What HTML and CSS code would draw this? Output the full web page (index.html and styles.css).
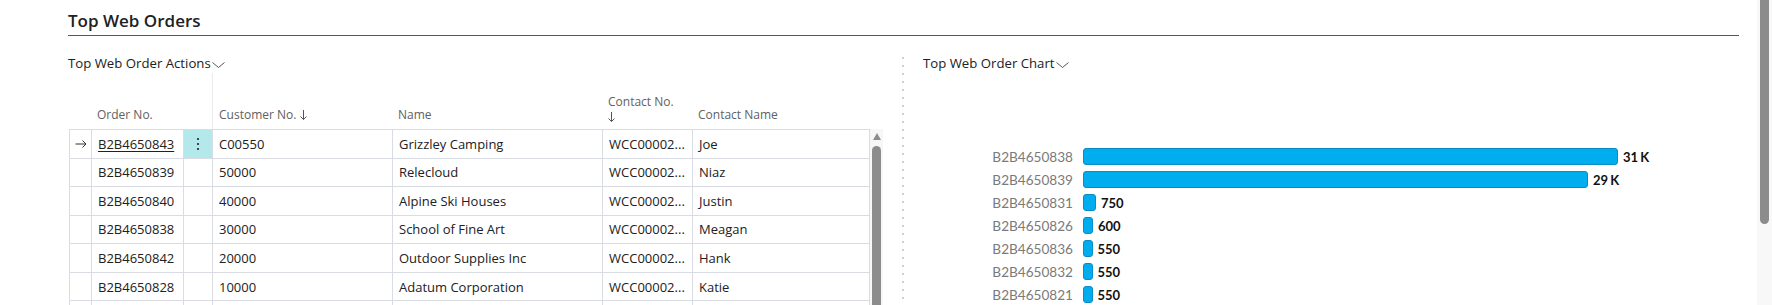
FILE: index.html
```html
<!DOCTYPE html>
<html>
<head>
<meta charset="utf-8">
<link rel="stylesheet" href="styles.css">
</head>
<body>
<div class="page">
  <main class="main">
    <h1 class="title">Top Web Orders</h1>
    <div class="parts">
      <section class="actions">
        <div class="part-head">Top Web Order Actions<svg class="chev" width="13" height="6" viewBox="0 0 13 6"><polyline points="0.5,0.5 6.5,5.5 12.5,0.5" fill="none" stroke="#555" stroke-width="1"/></svg></div>
        <div class="grid-wrap">
          <table class="grid">
            <colgroup>
              <col class="c-sel"><col class="c-no"><col class="c-act"><col class="c-cust"><col class="c-name"><col class="c-cno"><col class="c-cname">
            </colgroup>
            <thead>
              <tr class="head">
                <th></th>
                <th>Order No.</th>
                <th></th>
                <th class="frozen">Customer No. <svg class="sort" width="7" height="10" viewBox="0 0 7 10"><line x1="3.5" y1="0" x2="3.5" y2="9.5" stroke="#555" stroke-width="1"/><polyline points="0.5,6.5 3.5,9.5 6.5,6.5" fill="none" stroke="#555" stroke-width="1"/></svg></th>
                <th>Name</th>
                <th class="two">Contact No.<br><svg class="sort" width="7" height="10" viewBox="0 0 7 10"><line x1="3.5" y1="0" x2="3.5" y2="9.5" stroke="#555" stroke-width="1"/><polyline points="0.5,6.5 3.5,9.5 6.5,6.5" fill="none" stroke="#555" stroke-width="1"/></svg></th>
                <th>Contact Name</th>
              </tr>
            </thead>
            <tbody>
              <tr class="current">
                <td class="sel"><svg width="12" height="8" viewBox="0 0 12 8"><line x1="0.5" y1="4" x2="11" y2="4" stroke="#333" stroke-width="1"/><polyline points="7.5,0.5 11,4 7.5,7.5" fill="none" stroke="#333" stroke-width="1"/></svg></td>
                <td><a class="link">B2B4650843</a></td>
                <td class="act"><svg width="4" height="14" viewBox="0 0 4 14"><circle cx="2" cy="2" r="1.1" fill="#222"/><circle cx="2" cy="7" r="1.1" fill="#222"/><circle cx="2" cy="12" r="1.1" fill="#222"/></svg></td>
                <td>C00550</td>
                <td>Grizzley Camping</td>
                <td>WCC00002...</td>
                <td>Joe</td>
              </tr>
              <tr>
                <td class="sel"></td><td>B2B4650839</td><td class="act"></td><td>50000</td><td>Relecloud</td><td>WCC00002...</td><td>Niaz</td>
              </tr>
              <tr>
                <td class="sel"></td><td>B2B4650840</td><td class="act"></td><td>40000</td><td>Alpine Ski Houses</td><td>WCC00002...</td><td>Justin</td>
              </tr>
              <tr>
                <td class="sel"></td><td>B2B4650838</td><td class="act"></td><td>30000</td><td>School of Fine Art</td><td>WCC00002...</td><td>Meagan</td>
              </tr>
              <tr>
                <td class="sel"></td><td>B2B4650842</td><td class="act"></td><td>20000</td><td>Outdoor Supplies Inc</td><td>WCC00002...</td><td>Hank</td>
              </tr>
              <tr>
                <td class="sel"></td><td>B2B4650828</td><td class="act"></td><td>10000</td><td>Adatum Corporation</td><td>WCC00002...</td><td>Katie</td>
              </tr>
              <tr>
                <td class="sel"></td><td></td><td class="act"></td><td></td><td></td><td></td><td></td>
              </tr>
            </tbody>
          </table>
          <div class="vscroll"><span class="up"></span><span class="thumb"></span></div>
        </div>
      </section>
      <div class="divider"></div>
      <section class="chart-part">
        <div class="part-head">Top Web Order Chart<svg class="chev" width="13" height="6" viewBox="0 0 13 6"><polyline points="0.5,0.5 6.5,5.5 12.5,0.5" fill="none" stroke="#555" stroke-width="1"/></svg></div>
        <div class="chart">
          <div class="label">B2B4650838</div><div class="bar-cell"><span class="bar" style="width:535px"></span><span class="val">31 K</span></div>
          <div class="label">B2B4650839</div><div class="bar-cell"><span class="bar" style="width:505px"></span><span class="val">29 K</span></div>
          <div class="label">B2B4650831</div><div class="bar-cell"><span class="bar" style="width:13px"></span><span class="val">750</span></div>
          <div class="label">B2B4650826</div><div class="bar-cell"><span class="bar" style="width:10px"></span><span class="val">600</span></div>
          <div class="label">B2B4650836</div><div class="bar-cell"><span class="bar" style="width:9.5px"></span><span class="val">550</span></div>
          <div class="label">B2B4650832</div><div class="bar-cell"><span class="bar" style="width:9.5px"></span><span class="val">550</span></div>
          <div class="label">B2B4650821</div><div class="bar-cell"><span class="bar" style="width:9.5px"></span><span class="val">550</span></div>
        </div>
      </section>
    </div>
  </main>
  <div class="page-scroll"><div class="page-thumb"></div></div>
</div>
</body>
</html>
```
FILE: styles.css
```css
* { box-sizing: border-box; }
html, body { margin: 0; padding: 0; height: 305px; overflow: hidden; background: #fff; }
body { font-family: "Open Sans", "Noto Sans", sans-serif; color: #212121; }

.page { display: flex; height: 305px; }
.main { flex: 1; min-width: 0; padding: 0 18px 0 68px; }

.title {
  margin: 0;
  padding: 9px 0 2px;
  font-size: 17px;
  font-weight: 600;
  line-height: 24px;
  color: #212121;
  border-bottom: 1px solid #505866;
}

.parts { display: flex; margin-top: 17px; }
.actions { width: 815px; flex: none; }
.chart-part { flex: 1; min-width: 0; }

.part-head { font-size: 13.2px; line-height: 20px; color: #212121; white-space: nowrap; }
.chev { margin-left: 1px; vertical-align: baseline; }

.divider {
  flex: none;
  width: 2px;
  margin: 4px 19px 0 19px;
  background: repeating-linear-gradient(to bottom, #d0d0d0 0 2px, transparent 2px 8px);
}

.grid-wrap { display: flex; margin-left: 1px; }
.grid {
  table-layout: fixed;
  width: 801px;
  border-collapse: separate;
  border-spacing: 0;
  font-size: 13px;
  flex: none;
}
.c-sel { width: 22px; }
.c-no { width: 92px; }
.c-act { width: 29px; }
.c-cust { width: 180px; }
.c-name { width: 210px; }
.c-cno { width: 90px; }
.c-cname { width: 178px; }

.grid tr.head { height: 56px; }
.grid th {
  font-weight: 400;
  font-size: 12px;
  line-height: 15px;
  color: #616161;
  text-align: left;
  vertical-align: bottom;
  padding: 0 7px 7px 6px;
  white-space: nowrap;
}
.grid th.frozen { border-left: 1px solid #ebebeb; }
.grid th.two { padding-bottom: 5px; white-space: normal; }
.sort { vertical-align: -1px; }

.grid tbody tr { height: 28px; }
.grid td {
  border-top: 1px solid #d9dde3;
  border-left: 1px solid #d9dde3;
  padding: 0 7px 0 6px;
  white-space: nowrap;
  overflow: hidden;
  vertical-align: middle;
  line-height: 18px;
}
.grid td:last-child { border-right: 1px solid #d9dde3; }
.grid td.sel { padding: 0; text-align: center; }
.grid td.sel svg { display: block; margin: 0 auto; }
.grid td.act { padding: 0; text-align: center; }
.grid td.act svg { display: block; margin: 0 auto; }
.current td.act { background: #b4e9ec; }
.link { color: #212121; text-decoration: underline; text-underline-offset: 2px; }

.vscroll {
  width: 13px;
  margin-top: 56px;
  background: #f7f7f7;
  display: flex;
  flex-direction: column;
  align-items: center;
  padding-top: 4px;
  height: 200px;
}
.up {
  width: 0; height: 0;
  border-left: 4.5px solid transparent;
  border-right: 4.5px solid transparent;
  border-bottom: 7px solid #8c8c8c;
}
.thumb {
  width: 9px;
  height: 190px;
  margin-top: 6px;
  background: #8c8c8c;
  border-radius: 4.5px 4.5px 0 0;
}

.chart {
  margin-top: 72px;
  display: grid;
  grid-template-columns: 150px 1fr;
  grid-auto-rows: 23px;
  column-gap: 10px;
  align-items: center;
  font-family: Lato, "Open Sans", sans-serif;
  font-size: 13px;
}
.label { text-align: right; color: #7a7a7a; font-size: 13.6px; }
.bar-cell { display: flex; align-items: center; gap: 5px; }
.bar {
  height: 17px;
  background: #00aeef;
  border: 1px solid #0a8bc8;
  border-radius: 3px;
  flex: none;
}
.val { font-weight: 700; color: #111; word-spacing: -1px; }

.page-scroll { width: 15px; flex: none; background: #f8f8f8; padding-left: 3px; }
.page-thumb { width: 9px; height: 224px; background: #8c8c8c; border-radius: 0 0 4.5px 4.5px; }
```
